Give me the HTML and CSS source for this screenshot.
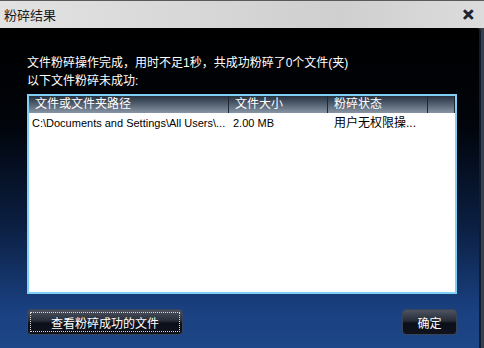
FILE: index.html
```html
<!DOCTYPE html>
<html>
<head>
    <title>粉碎结果</title>
    <link rel="stylesheet" href="styles.css">
</head>
<body>
    <div class="dialog">
        <div class="titlebar">
            <span class="title">粉碎结果</span>
            <span class="close">✕</span>
        </div>
        <div class="content">
            <div class="summary">文件粉碎操作完成，用时不足1秒，共成功粉碎了0个文件(夹)</div>
            <div class="summary">以下文件粉碎未成功:</div>
            <div class="list">
                <div class="list-head">
                    <div class="col col-path">文件或文件夹路径</div>
                    <div class="col col-size">文件大小</div>
                    <div class="col col-state">粉碎状态</div>
                    <div class="col col-rest"></div>
                </div>
                <div class="list-row">
                    <div class="col col-path">C:\Documents and Settings\All Users\...</div>
                    <div class="col col-size">2.00 MB</div>
                    <div class="col col-state">用户无权限操...</div>
                </div>
            </div>
            <div class="actions">
                <button class="btn btn-focus"><span>查看粉碎成功的文件</span></button>
                <button class="btn btn-ok">确定</button>
            </div>
        </div>
    </div>
</body>
</html>
```

FILE: styles.css
```css
body {
    margin: 0;
    width: 484px;
    height: 348px;
    overflow: hidden;
    background: #3a3f48;
    font-family: "Liberation Sans", "Noto Sans CJK SC", sans-serif;
}
.dialog {
    width: 484px;
    height: 348px;
    display: flex;
    flex-direction: column;
}
.titlebar {
    height: 27px;
    border-top: 1px solid #5a5a5a;
    background: linear-gradient(to right, #e2e2e2 0%, #d6d6d6 45%, #cfcfcf 70%, #dcdcdc 100%);
    display: flex;
    align-items: center;
    justify-content: space-between;
    padding: 0 9px 0 4px;
}
.title {
    font-size: 13px;
    color: #1a1a1a;
    font-family: "Noto Sans CJK SC", sans-serif;
}
.close {
    font-size: 15px;
    font-weight: bold;
    color: #1c2430;
    -webkit-text-stroke: 0.6px #1c2430;
}
.content {
    flex: 1;
    margin-right: 3px;
    border-right: 2px solid #0e1d33;
    border-top-right-radius: 4px;
    background: linear-gradient(to bottom, #000000 0%, #01040a 30%, #0b1f42 62%, #1a4080 88%, #1d4788 100%);
    padding: 26px 0 0 27px;
    display: flex;
    flex-direction: column;
}
.summary {
    color: #ffffff;
    font-size: 12px;
    line-height: 18px;
}
.list {
    margin-top: 4px;
    width: 426px;
    height: 196px;
    border: 2px solid #7fd0f4;
    background: #ffffff;
}
.list-head {
    display: flex;
    height: 17px;
    background: linear-gradient(to bottom, #27313f 0%, #4f5d6e 45%, #8795a4 100%);
    color: #ffffff;
    font-size: 12px;
    line-height: 17px;
}
.list-head .col {
    border-right: 1px solid #1f2833;
}
.col {
    padding-left: 6px;
    white-space: nowrap;
    overflow: hidden;
}
.col-path {
    width: 193px;
}
.col-size {
    width: 92px;
}
.col-state {
    width: 93px;
}
.col-rest {
    width: 20px;
}
.list-row {
    display: flex;
    height: 20px;
    font-size: 12px;
    line-height: 20px;
    color: #000000;
}
.list-row .col {
    border-right: 1px solid transparent;
}
.list-row .col-path {
    padding-left: 3px;
    width: 196px;
    font-size: 11px;
}
.list-row .col-size {
    padding-left: 4px;
    width: 94px;
    font-size: 11px;
}
.actions {
    margin-top: 15px;
    width: 430px;
    display: flex;
    justify-content: space-between;
}
.btn {
    height: 26px;
    border: 1px solid #3a4458;
    border-radius: 4px;
    background: linear-gradient(to bottom, #4d5460 0%, #262c38 45%, #0b0f1a 55%, #10131c 100%);
    color: #ffffff;
    font-family: "Noto Sans CJK SC", sans-serif;
    font-size: 12px;
    padding: 2px;
    cursor: pointer;
}
.btn-focus {
    width: 156px;
}
.btn-focus span {
    display: flex;
    align-items: center;
    justify-content: center;
    height: 100%;
    border: 1px dotted #d8d8d8;
    box-sizing: border-box;
}
.btn-ok {
    width: 55px;
}
```
